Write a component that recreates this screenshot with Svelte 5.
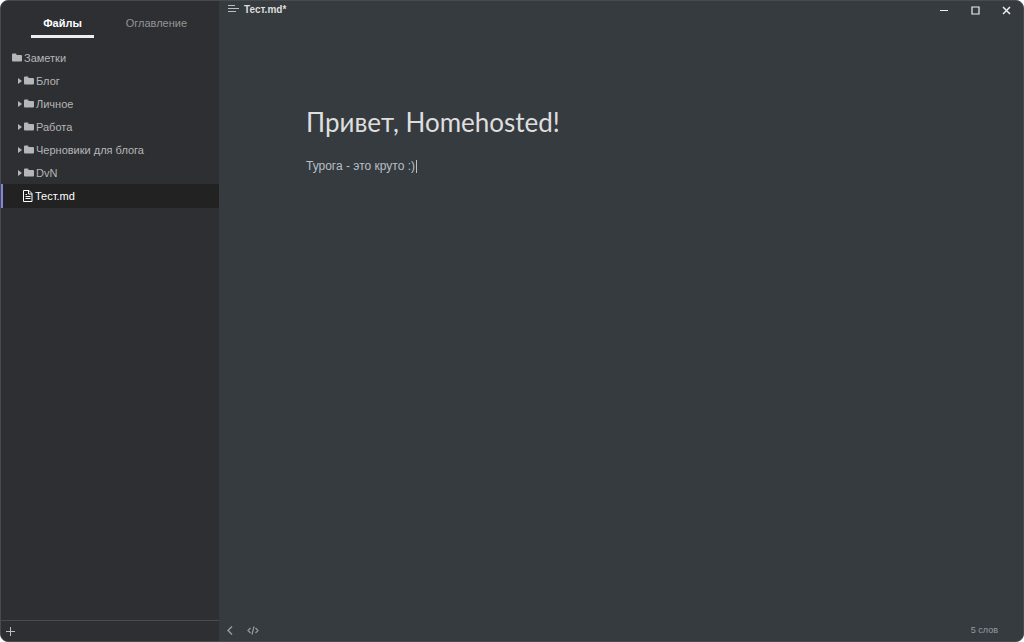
<script lang="ts">
  type Entry = { name: string; kind: 'root' | 'folder' | 'file' };

  const entries: Entry[] = [
    { name: 'Заметки', kind: 'root' },
    { name: 'Блог', kind: 'folder' },
    { name: 'Личное', kind: 'folder' },
    { name: 'Работа', kind: 'folder' },
    { name: 'Черновики для блога', kind: 'folder' },
    { name: 'DvN', kind: 'folder' },
    { name: 'Тест.md', kind: 'file' },
  ];

  let activeTab = $state('files');
  let selected = $state('Тест.md');
</script>

<div class="window">
  <aside>
    <div class="tabs" role="tablist">
      <button
        type="button"
        role="tab"
        class:active={activeTab === 'files'}
        aria-selected={activeTab === 'files'}
        onclick={() => (activeTab = 'files')}>Файлы</button
      >
      <button
        type="button"
        role="tab"
        class:active={activeTab === 'outline'}
        aria-selected={activeTab === 'outline'}
        onclick={() => (activeTab = 'outline')}>Оглавление</button
      >
    </div>

    <nav>
      {#each entries as entry}
        <button
          type="button"
          class="entry {entry.kind}"
          class:selected={selected === entry.name}
          onclick={() => (selected = entry.name)}
        >
          {#if entry.kind === 'folder'}
            <svg width="4" height="6" viewBox="0 0 4 6" aria-hidden="true">
              <path d="M0 0l4 3-4 3z" fill="currentColor" />
            </svg>
          {/if}
          {#if entry.kind === 'file'}
            <svg width="10" height="12" viewBox="0 0 10 12" aria-hidden="true">
              <path
                d="M.5.5h5.500l3 3v8H.5zM5.500.5v3.500H9M2.500 6.500h5M2.500 8.500h5M2.500 4.500h1.500"
                fill="none"
                stroke="currentColor"
              />
            </svg>
          {:else}
            <svg width="10" height="9" viewBox="0 0 10 9" aria-hidden="true">
              <path
                d="M1 .5h2.500q1 0 1 1V2H9q1 0 1 1v4.500q0 1-1 1H1q-1 0-1-1v-6q0-1 1-1z"
                fill="currentColor"
              />
            </svg>
          {/if}
          <span>{entry.name}</span>
        </button>
      {/each}
    </nav>

    <footer>
      <button type="button" aria-label="Новый файл">
        <svg width="9" height="9" viewBox="0 0 9 9" aria-hidden="true">
          <path d="M4.500 0v9M0 4.500h9" stroke="currentColor" />
        </svg>
      </button>
    </footer>
  </aside>

  <main>
    <header>
      <button type="button" class="menu" aria-label="Меню">
        <svg width="11" height="8" viewBox="0 0 11 8" aria-hidden="true">
          <path d="M0 .5h7M0 3.500h11M0 6.500h8" stroke="currentColor" />
        </svg>
      </button>
      <span class="title">Тест.md*</span>
      <div class="controls">
        <button type="button" aria-label="Свернуть">
          <svg width="9" height="9" viewBox="0 0 9 9" aria-hidden="true">
            <path d="M0 4.500h8" stroke="currentColor" />
          </svg>
        </button>
        <button type="button" aria-label="Развернуть">
          <svg width="9" height="9" viewBox="0 0 9 9" aria-hidden="true">
            <path d="M1 1h7v7H1z" fill="none" stroke="currentColor" stroke-width="1.200" />
          </svg>
        </button>
        <button type="button" aria-label="Закрыть">
          <svg width="9" height="9" viewBox="0 0 9 9" aria-hidden="true">
            <path d="M1 1l7 7M8 1L1 8" stroke="currentColor" stroke-width="1.500" />
          </svg>
        </button>
      </div>
    </header>

    <article>
      <h1>Привет, Homehosted!</h1>
      <p>Турога - это круто :)<span class="caret"></span></p>
    </article>

    <div class="status">
      <button type="button" aria-label="Скрыть боковую панель">
        <svg width="6" height="9" viewBox="0 0 6 9" aria-hidden="true">
          <path d="M5 .5l-4 4 4 4" fill="none" stroke="currentColor" stroke-width="1.500" />
        </svg>
      </button>
      <button type="button" aria-label="Исходный код">
        <svg width="12" height="9" viewBox="0 0 12 9" aria-hidden="true">
          <path
            d="M3.500 2L1 4.500 3.500 7M8.500 2L11 4.500 8.500 7M7 .5l-2 8"
            fill="none"
            stroke="currentColor"
            stroke-width="1.200"
          />
        </svg>
      </button>
      <button type="button" class="count">5 слов</button>
    </div>
  </main>
</div>

<style>
  :global(body) {
    background: #fff;
  }

  .window {
    box-sizing: border-box;
    min-height: 100vh;
    display: grid;
    grid-template-columns: 218px 1fr;
    border: 1px solid #484b4e;
    border-radius: 8px;
    overflow: hidden;
    background: #363b40;
    color: #b8bfc6;
    font-family: 'Liberation Sans', Arial, sans-serif;
    font-size: 11px;
  }

  button {
    margin: 0;
    padding: 0;
    border: 0;
    background: transparent;
    color: inherit;
    font: inherit;
    cursor: pointer;
  }

  svg {
    display: block;
    flex: none;
  }

  aside {
    display: flex;
    flex-direction: column;
    background: #2e2f33;
  }

  .tabs {
    display: flex;
    justify-content: space-between;
    height: 37px;
    padding: 0 30px;
  }

  .tabs button {
    padding: 10px 2px 0;
    border-bottom: 3px solid transparent;
    color: #929497;
  }

  .tabs .active {
    width: 63px;
    border-color: #eee;
    color: #fff;
    font-weight: bold;
  }

  nav {
    flex: 1;
    padding-top: 8px;
  }

  .entry {
    display: flex;
    align-items: center;
    gap: 2px;
    width: 100%;
    height: 23px;
    color: #b5b6b7;
    text-align: left;
  }

  .entry.root {
    padding-left: 11px;
  }

  .entry.folder {
    padding-left: 17px;
  }

  .entry.file {
    padding-left: 22px;
  }

  .entry.selected {
    height: 24px;
    background: #222;
    box-shadow: inset 2px 0 #8583e0;
    color: #fff;
  }

  aside footer {
    display: flex;
    align-items: center;
    height: 20px;
    padding-left: 5px;
    border-top: 1px solid #4a4b4f;
  }

  main {
    display: flex;
    flex-direction: column;
    min-width: 0;
  }

  header {
    display: flex;
    align-items: center;
    height: 16px;
    padding: 0 12px 0 9px;
  }

  .title {
    margin-left: 5px;
    color: #ddd;
    font-size: 10px;
    font-weight: bold;
  }

  .controls {
    display: flex;
    gap: 22px;
    margin-left: auto;
    padding-top: 2px;
    color: #eee;
  }

  article {
    flex: 1;
    padding: 85px 87px 0;
  }

  h1 {
    margin: 0;
    color: #dedede;
    font-family: Lato, 'Open Sans', sans-serif;
    font-size: 26px;
    font-weight: normal;
    line-height: 40px;
  }

  p {
    display: flex;
    align-items: center;
    margin: 15px 0 0;
    font-size: 12px;
    line-height: 18px;
  }

  .caret {
    width: 1px;
    height: 13px;
    margin-left: 1px;
    background: #b8bfc6;
  }

  .status {
    display: flex;
    align-items: center;
    gap: 14px;
    height: 22px;
    padding: 0 25px 0 8px;
    color: #969ba0;
  }

  .count {
    margin-left: auto;
    font-size: 9px;
  }
</style>
